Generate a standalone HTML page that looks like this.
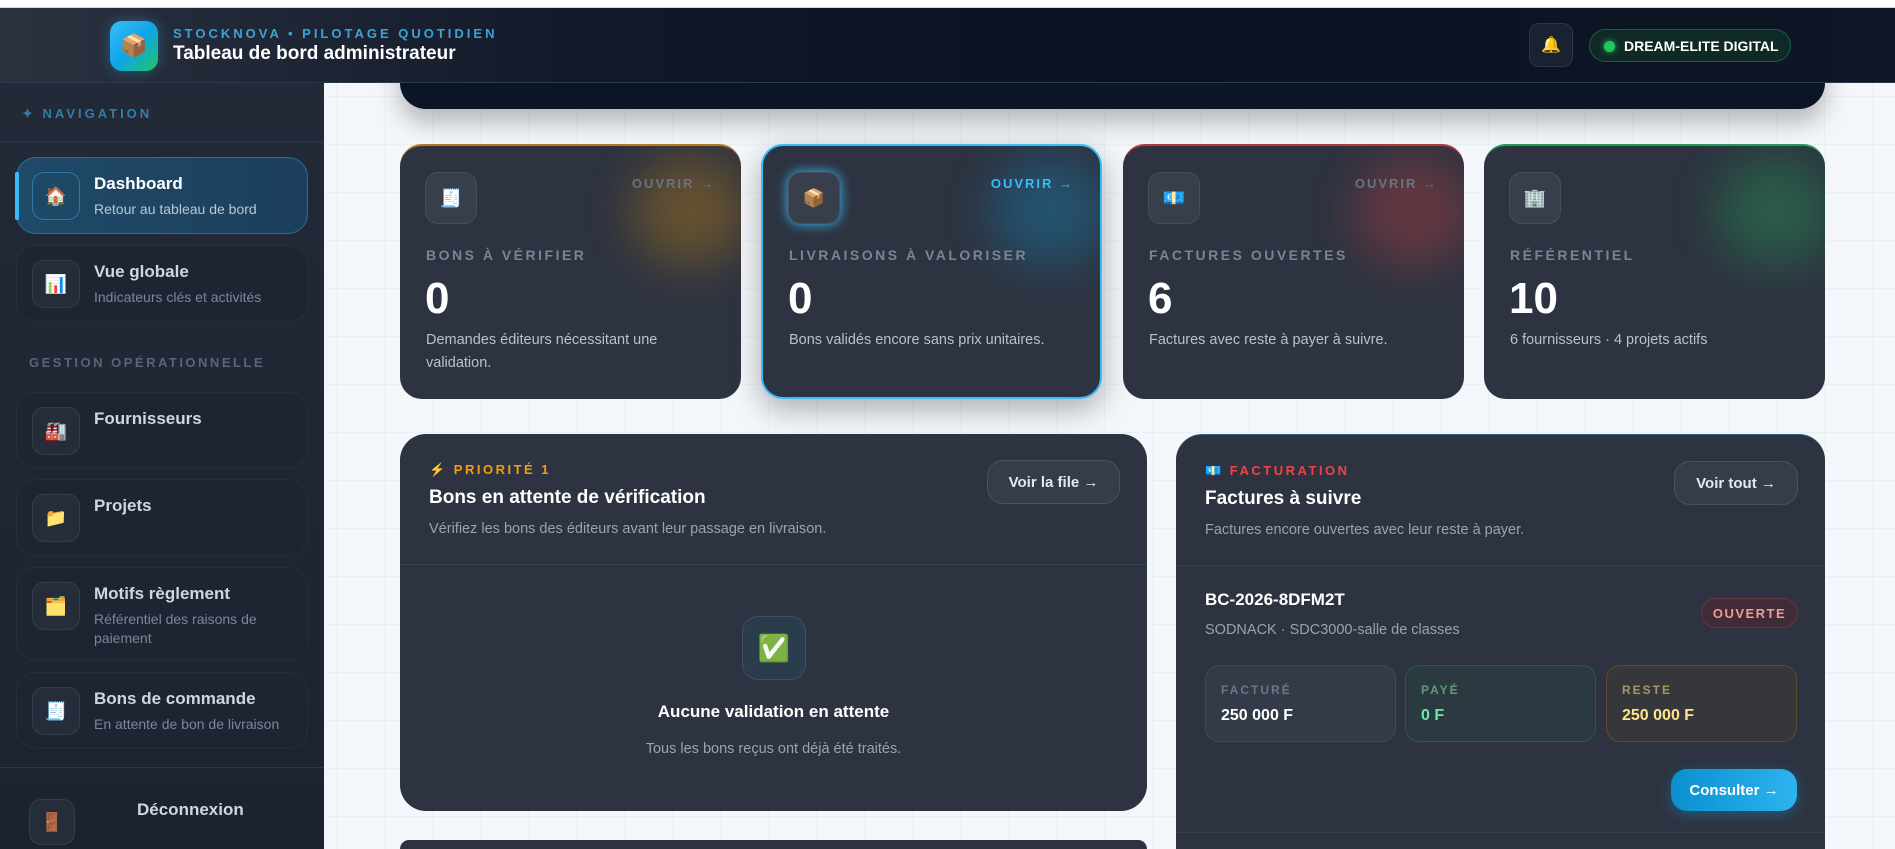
<!DOCTYPE html>
<html style="width:1895px;height:849px;overflow:hidden"><head><meta charset="utf-8"><style>
*{box-sizing:border-box;margin:0;padding:0}
body{width:1895px;height:849px;overflow:hidden;background:#f3f6fa;font-family:"Liberation Sans","Noto Sans CJK JP",sans-serif;position:relative;
background-image:linear-gradient(rgba(200,210,225,.18) 1px,transparent 1px),linear-gradient(90deg,rgba(200,210,225,.18) 1px,transparent 1px);background-size:48px 48px}
.abs{position:absolute}
.topline{left:0;top:0;width:1895px;height:8px;background:#fff;border-bottom:1px solid #cfd6df}
.header{left:0;top:8px;width:1895px;height:75px;background:linear-gradient(90deg,#2b3240 0%,#121a2a 30%,#0a1222 60%,#0f1726 100%);border-bottom:1px solid #2a3a4c}
.logo{left:110px;top:21px;width:48px;height:50px;border-radius:12px;background:linear-gradient(135deg,#38bdf8,#0ea5e9 50%,#22c55e);display:flex;align-items:center;justify-content:center;font-size:22px;box-shadow:0 0 14px rgba(56,189,248,.35)}
.ht1{left:173px;top:26px;font-size:13px;font-weight:bold;letter-spacing:3px;color:#38a4d8}
.ht2{left:173px;top:43px;font-size:19px;font-weight:bold;color:#fff}
.bell{left:1529px;top:23px;width:44px;height:44px;border-radius:10px;background:#1a2232;border:1px solid #2c3648;display:flex;align-items:center;justify-content:center;font-size:16px}
.org{left:1589px;top:29px;width:202px;height:33px;border-radius:17px;background:#0f2a26;border:1px solid #1f5a46;color:#fff;font-size:14px;font-weight:bold;display:flex;align-items:center;padding-left:34px}
.org:before{content:"";position:absolute;left:14px;top:11px;width:11px;height:11px;border-radius:50%;background:#22c55e;box-shadow:0 0 6px #22c55e}
.side{left:0;top:83px;width:324px;height:766px;background:linear-gradient(180deg,#222a38,#1c2230)}
.nav{left:22px;top:106px;font-size:13px;font-weight:bold;letter-spacing:3px;color:#2f7fa9}
.sdiv{left:0;top:141px;width:324px;height:2px;background:#263446}
.item{left:16px;width:292px;border-radius:20px;border:1px solid #262e3c;background:#1e2431}
.item .ic{position:absolute;left:15px;top:14px;width:48px;height:48px;border-radius:12px;background:#262d3a;border:1px solid #343d4c;display:flex;align-items:center;justify-content:center;font-size:18px}
.item .t{position:absolute;left:77px;top:16px;font-size:17px;font-weight:bold;color:#cfd6e2}
.item .s{position:absolute;left:77px;top:42px;font-size:14px;color:#7c879a;line-height:19px;width:200px}
.item.act{background:linear-gradient(90deg,#1f4a68,#1c3f5c);border-color:#2c6d95}
.item.act .t{color:#fff}.item.act .s{color:#b8c8d8}
.item.act .ic{background:#1d4866;border-color:#2f78a3}
.item.act:before{content:"";position:absolute;left:-2px;top:14px;width:4px;height:48px;border-radius:2px;background:#38bdf8}
.gest{left:29px;top:355px;font-size:13px;font-weight:bold;letter-spacing:2.5px;color:#5a6576}
.topcard{left:400px;top:40px;width:1425px;height:69px;border-radius:0 0 26px 26px;background:#0c1526;box-shadow:0 14px 24px rgba(0,0,0,.25)}
.stat{top:144px;width:341px;height:255px;border-radius:22px;background:#2d3340;overflow:hidden}
.stat .glow{position:absolute;right:-10px;top:10px;width:120px;height:110px;border-radius:50%;filter:blur(24px);opacity:.28}
.stat .ic{position:absolute;left:25px;top:26px;width:52px;height:52px;border-radius:13px;background:#383e4b;border:1px solid #474e5c;display:flex;align-items:center;justify-content:center;font-size:18px}
.stat .op{position:absolute;right:26px;top:30px;font-size:13px;font-weight:bold;letter-spacing:2px;color:#6b7280}
.stat .lb{position:absolute;left:26px;top:101px;font-size:14px;font-weight:bold;letter-spacing:2.5px;color:#7a8496}
.stat .n{position:absolute;left:25px;top:128px;font-size:44px;font-weight:bold;color:#fff}
.stat .d{position:absolute;left:26px;top:183px;font-size:14.5px;color:#b9c1cd;line-height:23px;width:270px}
.panel{background:#2d3340;border-radius:26px}
.kick{font-size:13px;font-weight:bold;letter-spacing:2.5px}
.btn{position:absolute;height:44px;border-radius:16px;background:#363c49;border:1px solid #4a5160;color:#e5e9ef;font-size:15px;font-weight:bold;display:flex;align-items:center;justify-content:center}
.box{position:absolute;top:665px;width:191px;height:77px;border-radius:14px}
.box .k{position:absolute;left:15px;top:17px;font-size:12px;font-weight:bold;letter-spacing:2px}
.box .v{position:absolute;left:15px;top:41px;font-size:16px;font-weight:bold}
</style></head><body>
<div class="abs topcard"></div>
<div class="abs topline"></div>
<div class="abs header"></div>
<div class="abs logo">📦</div>
<div class="abs ht1">STOCKNOVA • PILOTAGE QUOTIDIEN</div>
<div class="abs ht2">Tableau de bord administrateur</div>
<div class="abs bell">🔔</div>
<div class="abs org">DREAM-ELITE DIGITAL</div>

<div class="abs side"></div>
<div class="abs nav">✦ NAVIGATION</div>
<div class="abs sdiv"></div>
<div class="abs item act" style="top:157px;height:77px"><div class="ic">🏠</div><div class="t">Dashboard</div><div class="s">Retour au tableau de bord</div></div>
<div class="abs item" style="top:245px;height:77px"><div class="ic">📊</div><div class="t">Vue globale</div><div class="s">Indicateurs clés et activités</div></div>
<div class="abs gest">GESTION OPÉRATIONNELLE</div>
<div class="abs item" style="top:392px;height:76px"><div class="ic">🏭</div><div class="t">Fournisseurs</div></div>
<div class="abs item" style="top:479px;height:77px"><div class="ic">📁</div><div class="t">Projets</div></div>
<div class="abs item" style="top:567px;height:94px"><div class="ic">🗂️</div><div class="t">Motifs règlement</div><div class="s">Référentiel des raisons de paiement</div></div>
<div class="abs item" style="top:672px;height:77px"><div class="ic">🧾</div><div class="t">Bons de commande</div><div class="s">En attente de bon de livraison</div></div>
<div class="abs" style="left:0;top:767px;width:324px;height:1px;background:#2c3646"></div>
<div class="abs" style="left:29px;top:799px;width:46px;height:46px;border-radius:12px;background:#262d3a;border:1px solid #343d4c;display:flex;align-items:center;justify-content:center;font-size:18px">🚪</div>
<div class="abs" style="left:137px;top:800px;font-size:17px;font-weight:bold;color:#cfd6e2">Déconnexion</div>

<div class="abs stat" style="left:400px;border-top:2px solid #b7791f"><div class="glow" style="background:#f59e0b"></div><div class="ic">🧾</div><div class="op">OUVRIR →</div><div class="lb">BONS À VÉRIFIER</div><div class="n">0</div><div class="d">Demandes éditeurs nécessitant une validation.</div></div>
<div class="abs stat" style="left:761px;border:2px solid #38bdf8;box-shadow:0 10px 30px rgba(0,0,0,.3)"><div class="glow" style="background:#0ea5e9"></div><div class="ic" style="box-shadow:0 0 12px #38bdf8">📦</div><div class="op" style="color:#38bdf8">OUVRIR →</div><div class="lb">LIVRAISONS À VALORISER</div><div class="n">0</div><div class="d">Bons validés encore sans prix unitaires.</div></div>
<div class="abs stat" style="left:1123px;border-top:2px solid #b43a3a"><div class="glow" style="background:#ef4444"></div><div class="ic">💶</div><div class="op">OUVRIR →</div><div class="lb">FACTURES OUVERTES</div><div class="n">6</div><div class="d">Factures avec reste à payer à suivre.</div></div>
<div class="abs stat" style="left:1484px;border-top:2px solid #1f9d55"><div class="glow" style="background:#22c55e"></div><div class="ic">🏢</div><div class="lb">RÉFÉRENTIEL</div><div class="n">10</div><div class="d">6 fournisseurs · 4 projets actifs</div></div>

<div class="abs panel" style="left:400px;top:434px;width:747px;height:377px">
  <div class="abs kick" style="left:29px;top:28px;color:#f59e0b">⚡ PRIORITÉ 1</div>
  <div class="abs" style="left:29px;top:53px;font-size:19px;font-weight:bold;color:#fff">Bons en attente de vérification</div>
  <div class="abs" style="left:29px;top:87px;font-size:14.5px;color:#9aa3b1">Vérifiez les bons des éditeurs avant leur passage en livraison.</div>
  <div class="btn" style="left:587px;top:26px;width:133px">Voir la file →</div>
  <div class="abs" style="left:0;top:130px;width:747px;height:1px;background:#3a4150"></div>
  <div class="abs" style="left:342px;top:182px;width:64px;height:64px;border-radius:16px;background:#2b3c4c;border:1px solid #3a5266;display:flex;align-items:center;justify-content:center;font-size:26px">✅</div>
  <div class="abs" style="left:0;width:747px;text-align:center;top:268px;font-size:17px;font-weight:bold;color:#fff">Aucune validation en attente</div>
  <div class="abs" style="left:0;width:747px;text-align:center;top:307px;font-size:14.5px;color:#9aa3b1">Tous les bons reçus ont déjà été traités.</div>
</div>
<div class="abs" style="left:400px;top:840px;width:747px;height:9px;background:#2d3340;border-radius:26px 26px 0 0"></div>

<div class="abs" style="left:1176px;top:434px;width:649px;height:415px;background:#2d3340;border-radius:26px 26px 0 0;border-top:1px solid #2f5f80">
  <div class="abs kick" style="left:29px;top:28px;color:#ef4444">💶 FACTURATION</div>
  <div class="abs" style="left:29px;top:53px;font-size:19px;font-weight:bold;color:#fff">Factures à suivre</div>
  <div class="abs" style="left:29px;top:87px;font-size:14.5px;color:#9aa3b1">Factures encore ouvertes avec leur reste à payer.</div>
  <div class="btn" style="left:498px;top:26px;width:124px">Voir tout →</div>
  <div class="abs" style="left:0;top:130px;width:649px;height:1px;background:#3a4150"></div>
  <div class="abs" style="left:29px;top:155px;font-size:17px;font-weight:bold;color:#fff">BC-2026-8DFM2T</div>
  <div class="abs" style="left:29px;top:187px;font-size:14.5px;color:#9aa3b1">SODNACK · SDC3000-salle de classes</div>
  <div class="abs" style="left:525px;top:163px;width:97px;height:30px;border-radius:15px;background:#402c36;border:1px solid #6a3340;color:#f39a9a;font-size:13px;font-weight:bold;letter-spacing:1.5px;display:flex;align-items:center;justify-content:center">OUVERTE</div>
  <div class="abs" style="left:0;top:397px;width:649px;height:1px;background:#3a4150"></div>
</div>
<div class="box" style="left:1205px;background:#333a48;border:1px solid #40485a"><div class="k" style="color:#6e7788">FACTURÉ</div><div class="v" style="color:#fff">250 000 F</div></div>
<div class="box" style="left:1405px;background:#2b3a40;border:1px solid #2d5a48"><div class="k" style="color:#5f9d78">PAYÉ</div><div class="v" style="color:#6ee7a0">0 F</div></div>
<div class="box" style="left:1606px;background:#36373b;border:1px solid #5e4c2e"><div class="k" style="color:#a89663">RESTE</div><div class="v" style="color:#fde68a">250 000 F</div></div>
<div class="abs" style="left:1671px;top:769px;width:126px;height:42px;border-radius:16px;background:linear-gradient(90deg,#0b8fd0,#2db3ef);color:#fff;font-size:15px;font-weight:bold;display:flex;align-items:center;justify-content:center;box-shadow:0 4px 14px rgba(14,165,233,.35)">Consulter →</div>
</body></html>
